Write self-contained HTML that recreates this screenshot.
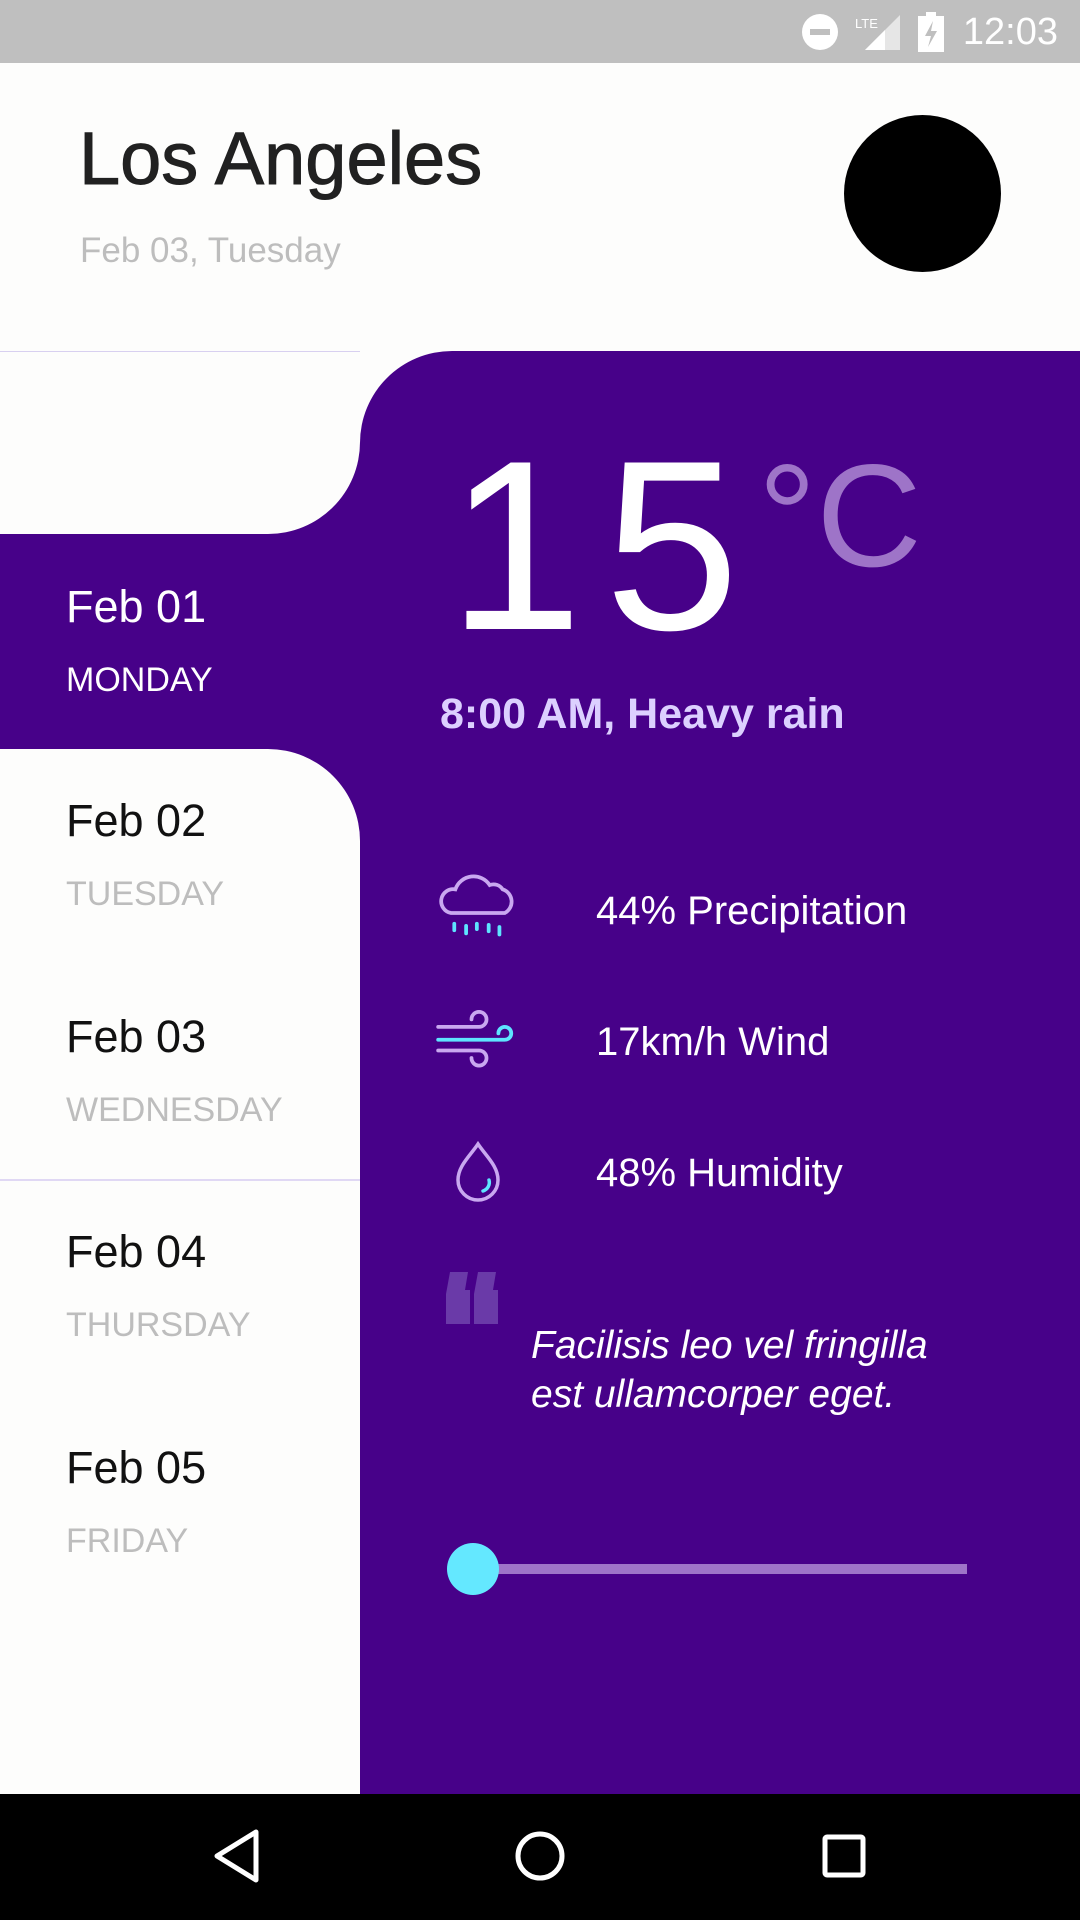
<!DOCTYPE html>
<html><head><meta charset="utf-8"><style>
*{margin:0;padding:0;box-sizing:border-box}
body{width:1080px;height:1920px;position:relative;overflow:hidden;background:#fdfdfc;font-family:"Liberation Sans",sans-serif}
.abs{position:absolute}
.t{position:absolute;white-space:nowrap;line-height:1}
</style></head><body>
<div class="abs" style="left:0;top:0;width:1080px;height:63px;background:#bfbfbf"></div>
<div class="t" style="right:22px;top:13px;font-size:38px;color:#fff">12:03</div>
<svg class="abs" style="left:795px;top:10px" width="110" height="44" viewBox="0 0 110 44">
<circle cx="25" cy="22" r="18" fill="#fff"/><rect x="15" y="19" width="20" height="6" fill="#bfbfbf"/>
<polygon points="70,40 105,40 105,5" fill="#e6e6e6"/><polygon points="70,40 90,40 90,20" fill="#fff"/>
<text x="60" y="18" font-size="13" fill="#fff" font-family="Liberation Sans">LTE</text>
</svg>
<svg class="abs" style="left:918px;top:12px" width="26" height="40" viewBox="0 0 26 40"><rect x="0" y="4" width="26" height="36" fill="#fff"/><rect x="8" y="0" width="10" height="5" fill="#fff"/><polygon points="15,9 7,24 13,24 10,35 19,19 13,19" fill="#bfbfbf"/></svg>

<div class="t" style="left:79px;top:122px;font-size:74px;color:#212121;-webkit-text-stroke:1px #212121">Los Angeles</div>
<div class="t" style="left:80px;top:233px;font-size:35px;color:#bdbdbd">Feb 03, Tuesday</div>
<div class="abs" style="left:844px;top:115px;width:157px;height:157px;border-radius:50%;background:#000"></div>

<div class="abs" style="left:0;top:351px;width:1080px;height:1443px;background:#470189"></div>
<div class="abs" style="left:0;top:351px;width:360px;height:183px;background:#fdfdfc;border-bottom-right-radius:92px;border-top:1px solid #d8d0f0"></div>
<div class="abs" style="left:360px;top:351px;width:720px;height:1px;background:#470189"></div>
<div class="abs" style="left:360px;top:351px;width:92px;height:92px;background:#fdfdfc"></div>
<div class="abs" style="left:360px;top:351px;width:184px;height:184px;background:#470189;border-radius:92px 0 0 0"></div>
<div class="abs" style="left:0;top:749px;width:360px;height:1045px;background:#fdfdfc;border-top-right-radius:92px"></div>
<div class="abs" style="left:0;top:1179px;width:360px;height:2px;background:#e0d8f4"></div>

<div class="t" style="left:66px;top:584px;font-size:45px;color:#fff">Feb 01</div>
<div class="t" style="left:66px;top:663px;font-size:34px;color:#fff">MONDAY</div>
<div class="t" style="left:66px;top:798px;font-size:45px;color:#111">Feb 02</div>
<div class="t" style="left:66px;top:877px;font-size:34px;color:#bdbdbd">TUESDAY</div>
<div class="t" style="left:66px;top:1014px;font-size:45px;color:#111">Feb 03</div>
<div class="t" style="left:66px;top:1093px;font-size:34px;color:#bdbdbd">WEDNESDAY</div>
<div class="t" style="left:66px;top:1229px;font-size:45px;color:#111">Feb 04</div>
<div class="t" style="left:66px;top:1308px;font-size:34px;color:#bdbdbd">THURSDAY</div>
<div class="t" style="left:66px;top:1445px;font-size:45px;color:#111">Feb 05</div>
<div class="t" style="left:66px;top:1524px;font-size:34px;color:#bdbdbd">FRIDAY</div>

<div class="t" style="left:448px;top:425px;font-size:242px;color:#fff;font-weight:100;letter-spacing:22px">15</div>
<div class="t" style="left:758px;top:443px;font-size:146px;color:#9e74c8">°C</div>
<div class="t" style="left:440px;top:693px;font-size:43px;color:#dcd0ff;font-weight:bold">8:00 AM, Heavy rain</div>

<svg class="abs" style="left:436px;top:870px" width="86" height="86" viewBox="0 0 80 80" fill="none" stroke-linecap="round">
<path d="M14 40 H64 A12 12 0 0 0 62 18 A10 10 0 0 0 50 14 A18 18 0 0 0 18 18 A11 11 0 0 0 14 40 Z" stroke="#c9a8f0" stroke-width="3.5"/>
<path d="M17 50v6M28 52v7M38 50v5M49 51v6M59 53v7" stroke="#5ee4ff" stroke-width="3.5"/>
</svg>
<svg class="abs" style="left:436px;top:1000px" width="86" height="86" viewBox="0 0 80 80" fill="none" stroke-width="3.5" stroke-linecap="round">
<path d="M2 25 H40 A7 7 0 1 0 33 18" stroke="#c9a8f0"/>
<path d="M2 37 H64 A6 6 0 1 0 58 31" stroke="#5ee4ff"/>
<path d="M2 47 H40 A7 7 0 1 1 33 54" stroke="#c9a8f0"/>
</svg>
<svg class="abs" style="left:448px;top:1138px" width="60" height="70" viewBox="0 0 60 70" fill="none" stroke-width="3.5" stroke-linecap="round">
<path d="M30 6 C22 18 10 28 10 42 A20 20 0 0 0 50 42 C50 28 38 18 30 6 Z" stroke="#c9a8f0"/>
<path d="M41 42 A9 9 0 0 1 35 53" stroke="#5ee4ff"/>
</svg>
<div class="t" style="left:596px;top:891px;font-size:40px;color:#fff">44% Precipitation</div>
<div class="t" style="left:596px;top:1022px;font-size:40px;color:#fff">17km/h Wind</div>
<div class="t" style="left:596px;top:1153px;font-size:40px;color:#fff">48% Humidity</div>

<svg class="abs" style="left:440px;top:1270px" width="62" height="56" viewBox="0 0 62 56"><path d="M10 2h18l-3 18h5v34H6V24Z M38 2h18l-3 18h5v34H34V24Z" fill="#6a3aa8"/></svg>
<div class="t" style="left:531px;top:1321px;font-size:39px;color:#fff;font-style:italic;line-height:49px">Facilisis leo vel fringilla<br>est ullamcorper eget.</div>

<div class="abs" style="left:473px;top:1564px;width:494px;height:10px;background:#9e74c8"></div>
<div class="abs" style="left:447px;top:1543px;width:52px;height:52px;border-radius:50%;background:#64e8ff"></div>

<div class="abs" style="left:0;top:1794px;width:1080px;height:126px;background:#000"></div>
<svg class="abs" style="left:0;top:1794px" width="1080" height="126" viewBox="0 0 1080 126" fill="none" stroke="#fff" stroke-width="5" stroke-linejoin="round">
<path d="M256 38 L217 62 L256 86 Z"/>
<circle cx="540" cy="62" r="22"/>
<rect x="825" y="43" width="38" height="38" rx="2"/>
</svg>
</body></html>
